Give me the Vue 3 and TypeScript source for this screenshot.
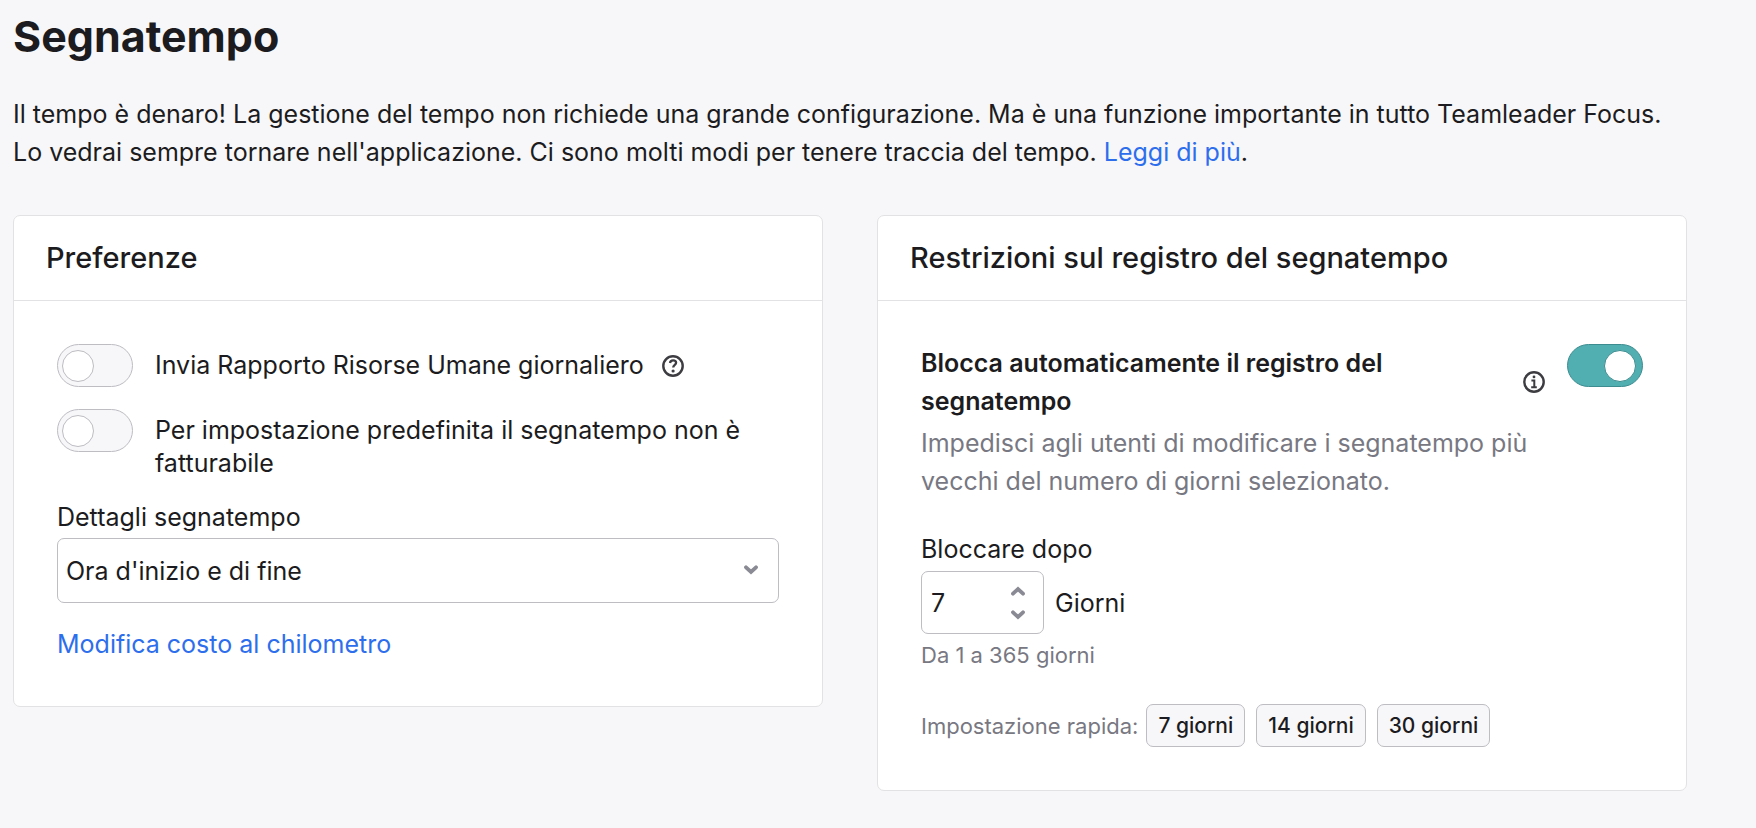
<script setup lang="ts">
import { ref } from 'vue'

const MIN_DAYS = 1
const MAX_DAYS = 365

const dailyReport = ref(false)
const nonBillable = ref(false)
const autoLock = ref(true)
const detail = ref('start-end')
const days = ref(7)
const presets: number[] = [7, 14, 30]

function step(delta: number): void {
  days.value = Math.min(MAX_DAYS, Math.max(MIN_DAYS, days.value + delta))
}
</script>

<template>
  <main class="page">
    <h1 class="title">Segnatempo</h1>
    <p class="intro">
      Il tempo è denaro! La gestione del tempo non richiede una grande configurazione. Ma è una funzione importante in tutto Teamleader Focus. Lo vedrai sempre tornare nell'applicazione. Ci sono molti modi per tenere traccia del tempo. <a class="link" href="#">Leggi di più</a>.
    </p>

    <div class="cards">
      <section class="card">
        <h2 class="card-title">Preferenze</h2>
        <div class="card-body">
          <div class="option">
            <input id="daily-report" v-model="dailyReport" class="switch" type="checkbox" role="switch" />
            <label class="option-label" for="daily-report">Invia Rapporto Risorse Umane giornaliero</label>
            <svg class="icon help" viewBox="0 0 22 22" role="img" aria-label="Aiuto">
              <circle cx="11" cy="11" r="9.7" fill="none" stroke="currentColor" stroke-width="2.4" />
              <path d="M8 8C8.2 6.2 9.5 5.3 11.1 5.3C12.9 5.3 14.1 6.3 14.1 7.8C14.1 9.9 11.2 9.9 11.2 12.6" fill="none" stroke="currentColor" stroke-width="2.3" />
              <circle cx="11.1" cy="16" r="1.6" fill="currentColor" />
            </svg>
          </div>
          <div class="option">
            <input id="non-billable" v-model="nonBillable" class="switch" type="checkbox" role="switch" />
            <label class="option-label" for="non-billable">Per impostazione predefinita il segnatempo non è fatturabile</label>
          </div>

          <label class="field-label" for="detail">Dettagli segnatempo</label>
          <div class="select-wrap">
            <select id="detail" v-model="detail" class="select">
              <option value="start-end">Ora d'inizio e di fine</option>
            </select>
            <svg class="chevron select-chevron" viewBox="0 0 14 10" aria-hidden="true">
              <path d="M2 2.3L7 7L12 2.3" />
            </svg>
          </div>
          <a class="link cost-link" href="#">Modifica costo al chilometro</a>
        </div>
      </section>

      <section class="card">
        <h2 class="card-title">Restrizioni sul registro del segnatempo</h2>
        <div class="card-body">
          <div class="lock">
            <div class="lock-text">
              <div class="lock-heading">
                <label class="lock-label" for="auto-lock">Blocca automaticamente il registro del segnatempo</label>
                <svg class="icon" viewBox="0 0 22 22" role="img" aria-label="Informazioni">
                  <circle cx="11" cy="11" r="9.7" fill="none" stroke="currentColor" stroke-width="2.4" />
                  <circle cx="11" cy="5.9" r="1.4" fill="currentColor" />
                  <path d="M8.4 9.6H11.3V16M8.2 16.2H13.8" fill="none" stroke="currentColor" stroke-width="2" />
                </svg>
              </div>
              <p class="lock-hint">Impedisci agli utenti di modificare i segnatempo più vecchi del numero di giorni selezionato.</p>
            </div>
            <input id="auto-lock" v-model="autoLock" class="switch" type="checkbox" role="switch" />
          </div>

          <label class="field-label days-label" for="days">Bloccare dopo</label>
          <div class="days-row">
            <div class="stepper">
              <input id="days" v-model.number="days" class="stepper-input" type="number" :min="MIN_DAYS" :max="MAX_DAYS" />
              <div class="stepper-buttons">
                <button class="step" type="button" aria-label="Aumenta" @click="step(1)">
                  <svg class="chevron" viewBox="0 0 14 10" aria-hidden="true"><path d="M2 7.7L7 3L12 7.7" /></svg>
                </button>
                <button class="step" type="button" aria-label="Diminuisci" @click="step(-1)">
                  <svg class="chevron" viewBox="0 0 14 10" aria-hidden="true"><path d="M2 2.3L7 7L12 2.3" /></svg>
                </button>
              </div>
            </div>
            <span>Giorni</span>
          </div>
          <p class="range">Da 1 a 365 giorni</p>

          <div class="quick">
            <span class="quick-label">Impostazione rapida:</span>
            <div class="presets">
              <button v-for="n in presets" :key="n" class="preset" type="button" @click="days = n">{{ n }} giorni</button>
            </div>
          </div>
        </div>
      </section>
    </div>
  </main>
</template>

<style>
body {
  background: #f7f7fa;
}
</style>

<style scoped>
.page {
  padding: 7px 69px 36px 13px;
  font-family: Inter, "Liberation Sans", sans-serif;
  font-size: 25px;
  line-height: 38px;
  color: #1c1c20;
}

.title,
.card-title,
.intro,
.lock-hint,
.range {
  margin: 0;
}

.title {
  font-size: 43px;
  line-height: 58px;
  font-weight: 700;
}

.intro {
  margin-top: 30px;
}

.link {
  color: #2d6eed;
  text-decoration: none;
}

.cards {
  display: grid;
  grid-template-columns: 1fr 1fr;
  align-items: start;
  gap: 54px;
  margin-top: 44px;
}

.card {
  border: 1px solid #e2e2e5;
  border-radius: 7px;
  background: #fff;
}

.card-title {
  padding: 23px 32px;
  border-bottom: 1px solid #e2e2e5;
  font-size: 29px;
  line-height: 38px;
  font-weight: 500;
}

.card-body {
  padding: 43px;
}

.option {
  display: flex;
  align-items: flex-start;
  min-height: 43px;
}

.option + .option {
  margin-top: 22px;
}

.option-label {
  margin-left: 22px;
  padding-top: 5px;
  line-height: 33px;
}

.switch {
  flex: none;
  box-sizing: border-box;
  display: flex;
  align-items: center;
  width: 76px;
  height: 43px;
  margin: 0;
  padding: 0 4px;
  appearance: none;
  border: 1px solid #bdbdc2;
  border-radius: 22px;
  background: #f7f7fa;
  cursor: pointer;
}

.switch::before {
  content: "";
  box-sizing: border-box;
  width: 32px;
  height: 32px;
  border: 1px solid #bdbdc2;
  border-radius: 50%;
  background: #fff;
}

.switch:checked {
  justify-content: flex-end;
  padding: 0 6px;
  border-color: #3d8d90;
  background: #51aeb1;
}

.switch:checked::before {
  border-color: #3d8d90;
}

.icon {
  flex: none;
  width: 22px;
  height: 22px;
  color: #3c3c41;
}

.help {
  margin: 11px 0 0 18px;
}

.field-label {
  display: block;
  margin-top: 18px;
}

.select-wrap {
  position: relative;
  margin-top: 2px;
}

.select {
  display: block;
  box-sizing: border-box;
  width: 100%;
  height: 65px;
  padding: 0 50px 0 8px;
  appearance: none;
  border: 1px solid #bdbdc2;
  border-radius: 7px;
  background: #fff;
  color: inherit;
  font: inherit;
}

.chevron {
  display: block;
  width: 14px;
  height: 10px;
  fill: none;
  stroke: #8a8a94;
  stroke-width: 3.8;
  stroke-linecap: round;
}

.select-chevron {
  position: absolute;
  top: 27px;
  right: 21px;
  pointer-events: none;
}

.cost-link {
  display: block;
  width: fit-content;
  margin-top: 22px;
}

.lock {
  display: flex;
  align-items: flex-start;
  gap: 22px;
}

.lock-text {
  flex: 1;
}

.lock-heading {
  display: flex;
  align-items: center;
  justify-content: space-between;
  gap: 22px;
}

.lock-label {
  font-weight: 600;
}

.lock-hint {
  margin-top: 4px;
  color: #787882;
}

.days-label {
  margin-top: 30px;
}

.days-row {
  display: flex;
  align-items: center;
  gap: 11px;
  margin-top: 3px;
}

.stepper {
  display: flex;
  box-sizing: border-box;
  width: 123px;
  height: 63px;
  border: 1px solid #bdbdc2;
  border-radius: 7px;
  background: #fff;
}

.stepper-input {
  flex: 1;
  min-width: 0;
  padding: 0 0 0 9px;
  appearance: textfield;
  border: 0;
  outline: 0;
  background: none;
  color: inherit;
  font: inherit;
}

.stepper-input::-webkit-inner-spin-button {
  appearance: none;
  margin: 0;
}

.stepper-buttons {
  display: flex;
  flex-direction: column;
  justify-content: center;
  margin-right: 13px;
}

.step {
  display: flex;
  align-items: center;
  justify-content: center;
  width: 24px;
  height: 24px;
  padding: 0;
  border: 0;
  background: none;
  cursor: pointer;
}

.range {
  margin-top: 2px;
  color: #787882;
  font-size: 22px;
}

.quick {
  display: flex;
  align-items: center;
  flex-wrap: wrap;
  gap: 8px;
  margin-top: 30px;
}

.quick-label {
  color: #787882;
  font-size: 22px;
}

.presets {
  display: flex;
  gap: 11px;
}

.preset {
  box-sizing: border-box;
  height: 43px;
  padding: 0 11px;
  border: 1px solid #bdbdc2;
  border-radius: 7px;
  background: #f7f7fa;
  color: inherit;
  font: inherit;
  font-size: 21px;
  font-weight: 500;
  cursor: pointer;
}
</style>
